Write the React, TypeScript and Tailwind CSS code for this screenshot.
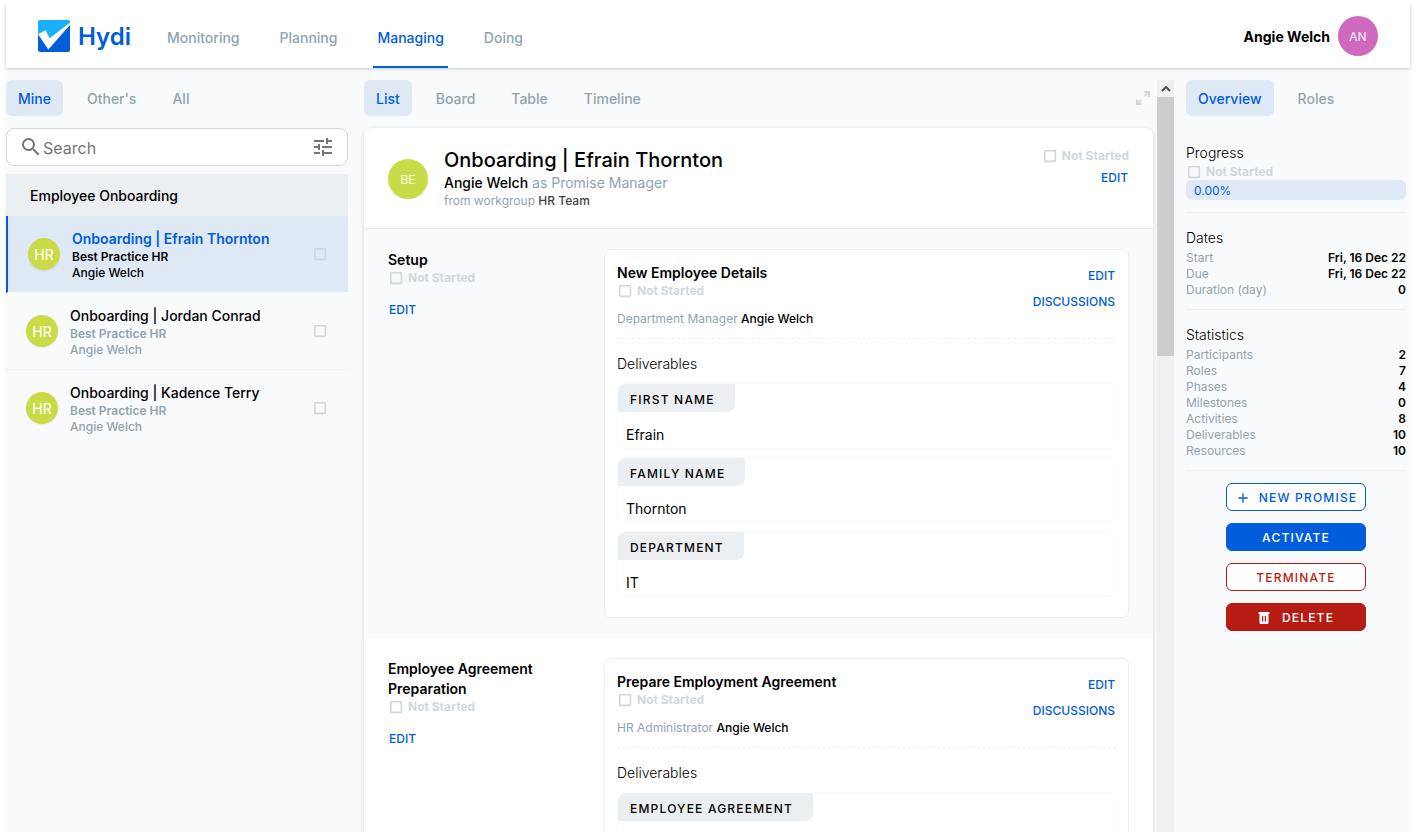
import React from "react";
import { MdSearch, MdTune, MdAdd } from "react-icons/md";

type PromiseItem = { title: string; group: string; owner: string; selected?: boolean };
type Field = { label: string; value: string };
type Activity = { title: string; role: string; person: string; fields: Field[] };
type Phase = { name: string; activity: Activity };

const promises: PromiseItem[] = [
  { title: "Onboarding | Efrain Thornton", group: "Best Practice HR", owner: "Angie Welch", selected: true },
  { title: "Onboarding | Jordan Conrad", group: "Best Practice HR", owner: "Angie Welch" },
  { title: "Onboarding | Kadence Terry", group: "Best Practice HR", owner: "Angie Welch" },
];

const phases: Phase[] = [
  {
    name: "Setup",
    activity: {
      title: "New Employee Details",
      role: "Department Manager",
      person: "Angie Welch",
      fields: [
        { label: "FIRST NAME", value: "Efrain" },
        { label: "FAMILY NAME", value: "Thornton" },
        { label: "DEPARTMENT", value: "IT" },
      ],
    },
  },
  {
    name: "Employee Agreement Preparation",
    activity: {
      title: "Prepare Employment Agreement",
      role: "HR Administrator",
      person: "Angie Welch",
      fields: [{ label: "EMPLOYEE AGREEMENT", value: "" }],
    },
  },
];

const dates: [string, string][] = [
  ["Start", "Fri, 16 Dec 22"],
  ["Due", "Fri, 16 Dec 22"],
  ["Duration (day)", "0"],
];

const statistics: [string, string][] = [
  ["Participants", "2"],
  ["Roles", "7"],
  ["Phases", "4"],
  ["Milestones", "0"],
  ["Activities", "8"],
  ["Deliverables", "10"],
  ["Resources", "10"],
];

function Logo() {
  return (
    <svg viewBox="0 0 32 32" className="size-8" aria-hidden="true">
      <defs>
        <clipPath id="logo-shape">
          <rect width="32" height="32" rx="2.5" />
        </clipPath>
      </defs>
      <g clipPath="url(#logo-shape)">
        <rect width="32" height="32" fill="#005ddb" />
        <path d="M0 0H32V3L12 20L0 15Z" fill="#18b0fb" />
        <path d="M0 14.2L7.6 10.2L11.6 18.2L32 2.6V5L10.3 29.6Z" fill="#fff" />
      </g>
    </svg>
  );
}

function ExpandIcon() {
  return (
    <svg viewBox="0 0 14 14" className="size-3.5" fill="#cfd8dc" aria-hidden="true">
      <path d="M8.2 0H14V5.800H12V3.400L9.400 6L8 4.600L10.600 2H8.200Z" />
      <path d="M5.800 14H0V8.200H2V10.600L4.600 8L6 9.400L3.400 12H5.800Z" />
    </svg>
  );
}

function TrashIcon() {
  return (
    <svg viewBox="0 0 12 12" className="size-3" fill="currentColor" aria-hidden="true">
      <path
        fillRule="evenodd"
        d="M0.500 0H11.500V2H0.500ZM1.500 2H10.500V10.500Q10.500 12 9 12H3Q1.500 12 1.500 10.500ZM4 4V9.500H5.200V4ZM6.800 4V9.500H8V4Z"
      />
    </svg>
  );
}

function BoxIcon() {
  return (
    <svg viewBox="0 0 16 16" className="size-4 shrink-0" fill="none" stroke="#cfd8dc" strokeWidth="1.6" aria-hidden="true">
      <rect x="2.800" y="2.800" width="10.600" height="10.600" rx="0.600" />
    </svg>
  );
}

function Status() {
  return (
    <div className="flex items-center gap-1 text-xs font-bold text-[#cfd8dc]">
      <BoxIcon />
      Not Started
    </div>
  );
}

function Tabs({ items, label }: { items: string[]; label: string }) {
  return (
    <nav aria-label={label} className="flex gap-3">
      {items.map((item, i) => (
        <button
          key={item}
          type="button"
          className={
            i === 0
              ? "h-9 rounded-md bg-[#dfe9f6] px-3 pt-0.5 text-sm font-medium text-[#005ddb]"
              : "h-9 rounded-md px-3 pt-0.5 text-sm font-medium text-[#90a4ae]"
          }
        >
          {item}
        </button>
      ))}
    </nav>
  );
}

function TextButton({ children }: { children: React.ReactNode }) {
  return (
    <button type="button" className="h-[26px] px-px pt-0.5 text-xs font-medium text-[#005ddb]">
      {children}
    </button>
  );
}

function Header() {
  const links = ["Monitoring", "Planning", "Managing", "Doing"];
  return (
    <header className="relative flex h-16 shrink-0 items-center bg-white px-8 shadow-[0_1px_3px_rgba(0,0,0,0.2)]">
      <a href="#home" className="flex items-center gap-2 text-2xl font-semibold text-[#005ddb]">
        <Logo />
        <span className="pt-0.5">Hydi</span>
      </a>
      <nav aria-label="Main" className="ml-8 flex h-full gap-8">
        {links.map((link) => (
          <a
            key={link}
            href={`#${link.toLowerCase()}`}
            className={
              link === "Managing"
                ? "flex items-center border-b-2 border-[#005ddb] px-1 pt-1.5 text-sm font-medium text-[#005ddb]"
                : "flex items-center border-b-2 border-transparent px-1 pt-1.5 text-sm font-medium text-[#90a4ae]"
            }
          >
            {link}
          </a>
        ))}
      </nav>
      <div className="ml-auto flex items-center gap-2">
        <span className="pt-0.5 text-sm font-bold">Angie Welch</span>
        <span className="flex size-10 items-center justify-center rounded-full bg-[#ce69bd] pt-0.5 text-xs text-white/90">
          AN
        </span>
      </div>
    </header>
  );
}

function PromiseRow({ item }: { item: PromiseItem }) {
  return (
    <li
      className={
        item.selected
          ? "flex items-center gap-3 border-b border-l-2 border-b-[#f9fafc] border-l-[#005ddb] bg-[#dfe9f6] bg-clip-padding px-5 py-[11px]"
          : "flex items-center gap-3 border-b border-dotted border-[#eceff1] px-5 py-[11px] last:border-transparent"
      }
    >
      <span className="flex size-8 items-center justify-center rounded-full bg-[#c9dc47] pt-0.5 text-sm text-white shadow-[0_1px_2px_rgba(0,0,0,0.08)]">
        HR
      </span>
      <div className={item.selected ? "flex-1 pt-0.5 text-xs font-medium" : "flex-1 pt-0.5 text-xs font-medium text-[#90a4ae]"}>
        <a
          href="#promise"
          className={item.selected ? "block text-sm font-semibold text-[#005ddb]" : "block text-sm text-black"}
        >
          {item.title}
        </a>
        <p className="font-semibold">{item.group}</p>
        <p>{item.owner}</p>
      </div>
      <BoxIcon />
    </li>
  );
}

function Sidebar() {
  return (
    <aside className="flex w-[342px] shrink-0 flex-col">
      <Tabs label="Owner" items={["Mine", "Other's", "All"]} />
      <div className="mt-3 flex h-[38px] items-center rounded-lg border border-[#cfd8dc] bg-white px-3 text-[#757575]">
        <label htmlFor="search" aria-label="Search">
          <MdSearch className="size-6" />
        </label>
        <input
          id="search"
          type="search"
          placeholder="Search"
          className="min-w-0 flex-1 pt-0.5 text-base outline-none placeholder:text-[#757575]"
        />
        <button type="button" aria-label="Filter">
          <MdTune className="size-6" />
        </button>
      </div>
      <h2 className="mt-2 flex h-[42px] items-center bg-[#eceff1] px-6 pt-0.5 text-sm font-medium">Employee Onboarding</h2>
      <ul>
        {promises.map((item) => (
          <PromiseRow key={item.title} item={item} />
        ))}
      </ul>
    </aside>
  );
}

function ActivityCard({ activity }: { activity: Activity }) {
  return (
    <article className="min-w-0 flex-1 rounded-md border border-[#eceff1] bg-white p-3">
      <div className="flex justify-between border-b border-dashed border-[#eceff1] pb-[11px]">
        <div className="pt-px">
          <h4 className="text-sm font-semibold">{activity.title}</h4>
          <Status />
          <p className="mt-3 text-xs text-[#90a4ae]">
            {activity.role} <span className="font-medium text-black">{activity.person}</span>
          </p>
        </div>
        <div className="flex flex-col items-end">
          <TextButton>EDIT</TextButton>
          <TextButton>DISCUSSIONS</TextButton>
        </div>
      </div>
      <h5 className="mt-[15px] mb-[9px] text-sm font-light">Deliverables</h5>
      {activity.fields.map((field) => (
        <div key={field.label} className="mb-2 h-[66px] rounded-lg border border-dotted border-[#f3f5f6]">
          <div className="flex">
            <span className="flex h-7 items-center rounded-tl-lg rounded-br-lg bg-[#eceff1] pt-1 pr-5 pl-3 text-xs font-medium tracking-widest">
              {field.label}
            </span>
          </div>
          <p className="mt-[13px] px-2 text-sm">{field.value}</p>
        </div>
      ))}
    </article>
  );
}

function Main() {
  return (
    <main className="flex min-w-0 flex-1">
      <div className="flex min-w-0 flex-1 flex-col overflow-hidden pr-1 pl-4">
        <div className="flex items-center justify-between">
          <Tabs label="View" items={["List", "Board", "Table", "Timeline"]} />
          <button type="button" aria-label="Expand" className="mr-[3px]">
            <ExpandIcon />
          </button>
        </div>
        <div className="mt-3 rounded-t-lg bg-white shadow-[0_1px_4px_rgba(0,0,0,0.16)]">
          <div className="flex items-center gap-4 border-b border-[#e3ebf0] px-6 pt-5 pb-[19px]">
            <span className="flex size-10 items-center justify-center rounded-full bg-[#c9dc47] pt-0.5 text-xs text-white/90">
              BE
            </span>
            <div className="flex-1">
              <h2 className="text-xl leading-[25px] font-medium">Onboarding | Efrain Thornton</h2>
              <p className="text-sm text-[#90a4ae]">
                <span className="font-medium text-black">Angie Welch</span> as Promise Manager
              </p>
              <p className="text-xs text-[#90a4ae]">
                from workgroup <span className="font-medium text-[#424242]">HR Team</span>
              </p>
            </div>
            <div className="flex flex-col items-end self-start">
              <Status />
              <TextButton>EDIT</TextButton>
            </div>
          </div>
          {phases.map((phase) => (
            <section key={phase.name} className="flex px-6 py-5 odd:bg-white even:bg-[#f9fafc]">
              <div className="w-[216px] shrink-0 pt-px pr-16">
                <h3 className="text-sm font-semibold">{phase.name}</h3>
                <Status />
                <div className="mt-2.5">
                  <TextButton>EDIT</TextButton>
                </div>
              </div>
              <ActivityCard activity={phase.activity} />
            </section>
          ))}
        </div>
      </div>
      <div className="w-[17px] shrink-0 bg-[#f0f0f0]" aria-hidden="true">
        <div className="flex h-[17px] items-center justify-center">
          <svg viewBox="0 0 10 6" className="h-1.5 w-2.5" fill="none" stroke="#505050" strokeWidth="2">
            <path d="M1 5L5 1L9 5" />
          </svg>
        </div>
        <div className="h-[259px] bg-[#cdcdcd]" />
      </div>
    </main>
  );
}

function Facts({ title, rows }: { title: string; rows: [string, string][] }) {
  return (
    <section className="border-b border-[#eceff1] pt-[15px] pb-[11px]">
      <h3 className="mb-0.5 text-sm font-light">{title}</h3>
      <dl>
        {rows.map(([name, value]) => (
          <div key={name} className="flex justify-between text-xs">
            <dt className="text-[#90a4ae]">{name}</dt>
            <dd className="font-semibold">{value}</dd>
          </div>
        ))}
      </dl>
    </section>
  );
}

function Details() {
  const button =
    "flex h-7 w-[140px] items-center justify-center rounded-md border pt-0.5 text-xs font-medium tracking-widest";
  return (
    <aside className="ml-3 w-56 shrink-0 pr-1">
      <Tabs label="Details" items={["Overview", "Roles"]} />
      <section className="mt-[27px] border-b border-[#eceff1] pb-3">
        <h3 className="mb-px text-sm font-light">Progress</h3>
        <Status />
        <p className="rounded-md bg-[#dfe9f6] px-2 pt-[3px] pb-px text-xs text-[#005ddb]">0.00%</p>
      </section>
      <Facts title="Dates" rows={dates} />
      <Facts title="Statistics" rows={statistics} />
      <div className="mt-3 flex flex-col items-center gap-3">
        <button type="button" className={`${button} gap-2 border-[#005ddb] bg-white text-[#005ddb]`}>
          <MdAdd className="size-4" />
          NEW PROMISE
        </button>
        <button type="button" className={`${button} border-[#005ddb] bg-[#005ddb] text-white`}>
          ACTIVATE
        </button>
        <button type="button" className={`${button} border-[#b71c14] bg-white text-[#b71c14]`}>
          TERMINATE
        </button>
        <button type="button" className={`${button} gap-3 border-[#b71c14] bg-[#b71c14] text-white`}>
          <TrashIcon />
          DELETE
        </button>
      </div>
    </aside>
  );
}

export default function App() {
  return (
    <div className="h-screen bg-white p-1 font-['Inter',sans-serif] text-black">
      <div className="flex h-full flex-col overflow-hidden bg-[#f9fafc] px-0.5">
        <Header />
        <div className="flex min-h-0 flex-1 pt-3">
          <Sidebar />
          <Main />
          <Details />
        </div>
      </div>
    </div>
  );
}
